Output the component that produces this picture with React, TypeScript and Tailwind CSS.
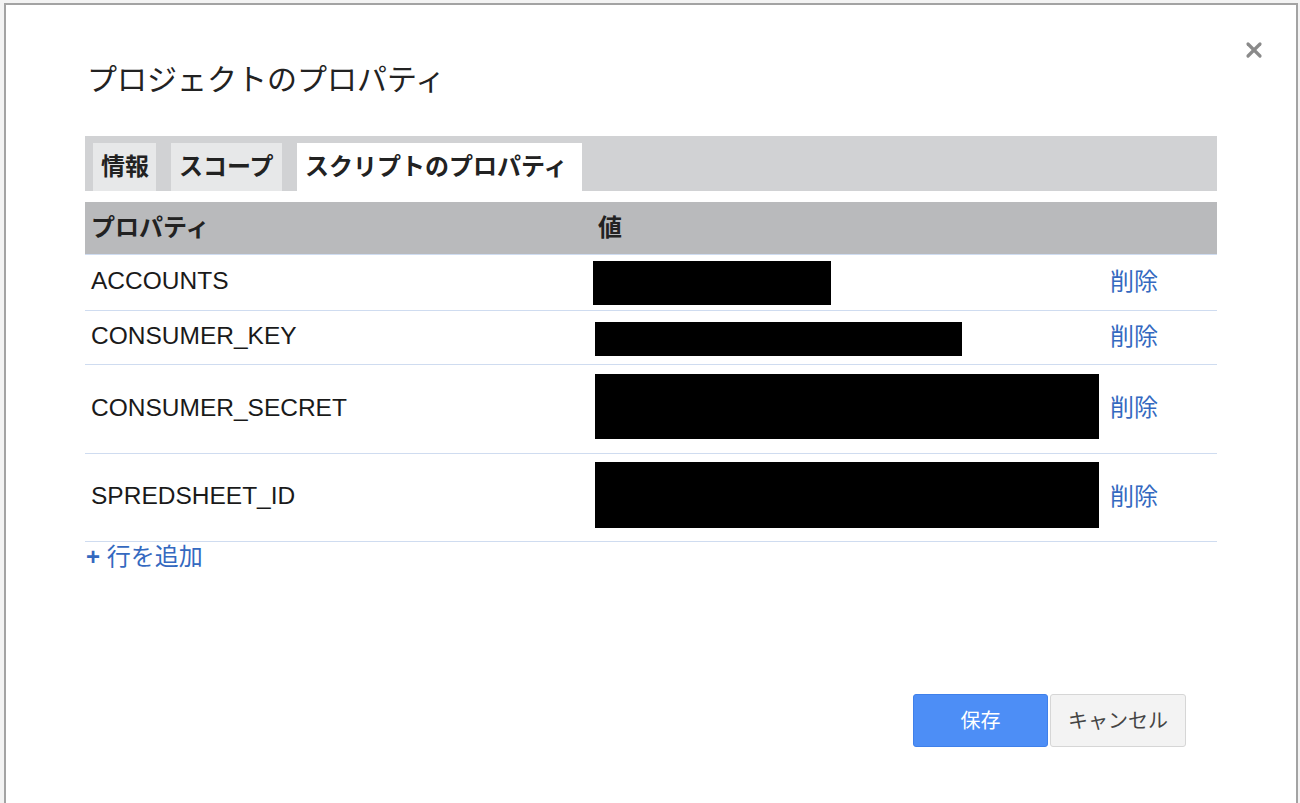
import { X } from "lucide-react";

const rows = [
  { key: "ACCOUNTS", h: "h-[56px]", box: "w-[238px] h-[44px]" },
  { key: "CONSUMER_KEY", h: "h-[54px]", box: "w-[367px] h-[34px] ml-[2px] mt-[3px]" },
  { key: "CONSUMER_SECRET", h: "h-[89px]", box: "w-[504px] h-[65px] ml-[2px] -mt-[6px]" },
  { key: "SPREDSHEET_ID", h: "h-[88px]", box: "w-[504px] h-[66px] ml-[2px] -mt-[6px]" },
];

const font = "font-['Liberation_Sans','Noto_Sans_CJK_JP',sans-serif]";

export default function App() {
  return (
    <div className={`w-[1300px] h-[803px] overflow-hidden bg-[#f3f3f3] pl-[4px] pt-[3px] ${font}`}>
      <div className="relative w-[1294px] h-[900px] bg-white border-2 border-[#a3a3a3] px-[79px]">
        {/* close */}
        <button className="absolute right-[30px] top-[33px] text-[#8a8a8a]">
          <X size={24} strokeWidth={3.2} />
        </button>

        <h1 className="pt-[55px] pl-[2px] text-[30px] leading-[40px] text-[#222] font-normal">
          プロジェクトのプロパティ
        </h1>

        {/* tabs */}
        <div className="mt-[36px] h-[55px] bg-[#d1d2d4] pt-[7px] pl-[8px] flex gap-[16px]">
          <div className="w-[63px] h-[48px] bg-[#e7e8e9] pl-[8px] text-[24px] leading-[48px] font-bold text-[#222]">情報</div>
          <div className="w-[111px] h-[48px] bg-[#e7e8e9] pl-[8px] text-[24px] leading-[48px] font-bold text-[#222] -ml-px">スコープ</div>
          <div className="w-[285px] h-[48px] bg-white pl-[8px] text-[24px] leading-[48px] font-bold text-[#222] -ml-px">スクリプトのプロパティ</div>
        </div>

        {/* table header */}
        <div className="mt-[11px] h-[53px] bg-[#b9babc] border-b border-[#cfdcf0] grid grid-cols-[508px_512px_112px] items-center text-[24px] font-bold text-[#222]">
          <div className="pl-[6px]">プロパティ</div>
          <div className="pl-[5px]">値</div>
          <div />
        </div>

        {rows.map((r) => (
          <div
            key={r.key}
            className={`${r.h} border-b border-[#cfdcf0] grid grid-cols-[508px_512px_112px] items-center text-[24.5px] text-[#1a1a1a]`}
          >
            <div className="pl-[6px] -mt-[2px]">{r.key}</div>
            <div>
              <div className={`bg-black ${r.box}`} />
            </div>
            <div className="pl-[5px] text-[24px] text-[#3469c0] -mt-[2px]">削除</div>
          </div>
        ))}

        <div className="pl-[1px] h-[30px] text-[24px] leading-[30px] text-[#3469c0]">
          <span className="font-bold">+</span> 行を追加
        </div>

        {/* buttons */}
        <div className="mt-[122px] mr-[31px] flex justify-end gap-[2px]">
          <button className="w-[135px] h-[53px] rounded-[3px] bg-[#4d8ef6] border border-[#3f80ea] text-white text-[20px]">
            保存
          </button>
          <button className="w-[136px] h-[53px] rounded-[3px] bg-[#f3f3f3] border border-[#d6d6d6] text-[#444] text-[20px]">
            キャンセル
          </button>
        </div>
      </div>
    </div>
  );
}
